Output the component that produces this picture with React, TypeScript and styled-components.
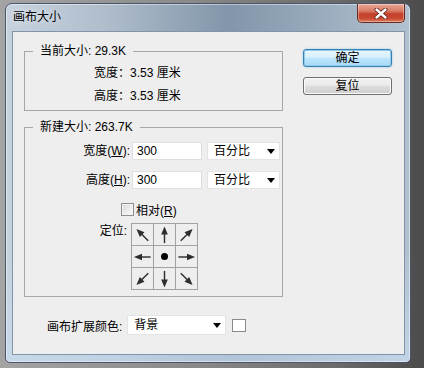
import styled, { createGlobalStyle } from 'styled-components';

const GlobalStyle = createGlobalStyle`
  html, body {
    margin: 0;
    padding: 0;
  }
  body {
    width: 424px;
    height: 368px;
    overflow: hidden;
    background: linear-gradient(90deg, #a4a4a4 0%, #8a8a8a 45%, #6a6a6a 80%, #4b4b4b 100%);
    font-family: 'Liberation Sans', 'Noto Sans CJK SC', sans-serif;
    font-size: 12px;
    color: #000;
  }
`;

const Window = styled.div`
  box-sizing: border-box;
  margin: 3px 0 0 5px;
  width: 406px;
  height: 360px;
  border: 1px solid #48566a;
  border-radius: 7px 7px 5px 5px;
  padding: 0 5px 7px 6px;
  display: flex;
  flex-direction: column;
  box-shadow: inset 0 0 0 1px rgba(255, 255, 255, 0.45);
  background:
    linear-gradient(180deg, rgba(255, 255, 255, 0) 70%, rgba(200, 220, 238, 0.7) 100%),
    linear-gradient(90deg, #c6d2de 0%, #afbdcb 25%, #8295aa 55%, #99abbd 78%, #b3c2d0 100%);
`;

const TitleBar = styled.div`
  height: 27px;
  display: flex;
  justify-content: space-between;
  align-items: flex-start;
`;

const Title = styled.div`
  margin: 4px 0 0 1px;
  line-height: 16px;
  font-size: 12px;
  font-family: 'Noto Sans CJK SC', sans-serif;
  text-shadow: 0 0 6px rgba(255, 255, 255, 0.9);
`;

const CloseButton = styled.div`
  width: 48px;
  height: 19px;
  box-sizing: border-box;
  border: 1px solid #6b2a1e;
  border-top: none;
  border-radius: 0 0 5px 5px;
  background: linear-gradient(180deg, #e9a899 0%, #d77a64 40%, #c4402a 55%, #c84a31 80%, #dd7f62 100%);
  box-shadow: inset 0 0 0 1px rgba(255, 255, 255, 0.35);
  display: flex;
  align-items: center;
  justify-content: center;
`;

const Client = styled.div`
  flex: 1;
  background: #eeeeee;
  border: 1px solid #8194a9;
  display: flex;
  flex-direction: column;
`;

const Top = styled.div`
  display: flex;
  gap: 20px;
  padding: 12px 0 0 11px;
`;

const LeftColumn = styled.div`
  display: flex;
  flex-direction: column;
  gap: 9px;
`;

const Group = styled.fieldset<{ $pad: string }>`
  box-sizing: border-box;
  width: 259px;
  min-width: 0;
  margin: 0;
  padding: ${(p) => p.$pad};
  border: 1px solid #a6a6a6;
`;

const Legend = styled.legend`
  margin-left: 8px;
  padding: 0 7px;
  line-height: 14px;
`;

const InfoRows = styled.div`
  display: grid;
  grid-template-columns: auto 1fr;
  row-gap: 7px;
  padding-left: 69px;
  line-height: 16px;
`;

const FormGrid = styled.div`
  display: grid;
  grid-template-columns: 102px 70px 73px;
  column-gap: 5px;
  align-items: center;
`;

const FieldLabel = styled.div`
  text-align: right;
  line-height: 16px;
  margin-right: -3px;
`;

const TextInput = styled.div`
  box-sizing: border-box;
  height: 18px;
  background: #fff;
  border: 1px solid #dedede;
  padding-left: 4px;
  line-height: 16px;
`;

const Dropdown = styled.div<{ $w: number; $h: number }>`
  box-sizing: border-box;
  width: ${(p) => p.$w}px;
  height: ${(p) => p.$h}px;
  background: #fff;
  border: 1px solid #e4e4e4;
  padding: 0 4px 0 6px;
  display: flex;
  align-items: center;
  justify-content: space-between;
  line-height: 16px;
`;

const SecondRow = styled.div`
  display: contents;
  & > * {
    margin-top: 11px;
  }
`;

const CheckRow = styled.div`
  grid-column: 1 / -1;
  margin-top: 11px;
  height: 18px;
  padding-left: 96px;
  display: flex;
  align-items: center;
  gap: 2px;
`;

const CheckBox = styled.div`
  box-sizing: border-box;
  width: 13px;
  height: 13px;
  border: 1px solid #8e8e8e;
  background: linear-gradient(135deg, #d6d6d6 0%, #eeeeee 60%, #fafafa 100%);
  box-shadow: inset 0 0 0 1px #f4f4f4;
`;

const AnchorRow = styled.div`
  grid-column: 1 / -1;
  margin-top: 5px;
  display: flex;
  align-items: flex-start;
`;

const AnchorLabel = styled.div`
  width: 102px;
  text-align: right;
  line-height: 16px;
`;

const AnchorGrid = styled.div`
  margin-left: 4px;
  display: grid;
  grid-template-columns: repeat(3, 22px);
  grid-auto-rows: 22px;
  border-left: 1px solid #a2a2a2;
  border-top: 1px solid #a2a2a2;
`;

const AnchorCell = styled.div`
  border-right: 1px solid #a2a2a2;
  border-bottom: 1px solid #a2a2a2;
  display: flex;
  align-items: center;
  justify-content: center;
`;

const Dot = styled.div`
  width: 7px;
  height: 7px;
  border-radius: 50%;
  background: #000;
`;

const RightColumn = styled.div`
  padding-top: 5px;
  display: flex;
  flex-direction: column;
  gap: 10px;
`;

const Button = styled.div<{ $primary?: boolean }>`
  box-sizing: border-box;
  width: 89px;
  height: 18px;
  border-radius: 3px;
  border: 1px solid ${(p) => (p.$primary ? '#3c7fb1' : '#707070')};
  background: ${(p) =>
    p.$primary
      ? 'linear-gradient(180deg, #eaf6fd 0%, #d9f0fc 45%, #bee6fd 50%, #a7d9f5 100%)'
      : 'linear-gradient(180deg, #f2f2f2 0%, #ebebeb 45%, #dddddd 50%, #cfcfcf 100%)'};
  box-shadow: ${(p) =>
    p.$primary ? 'inset 0 0 0 1px #8ecbea, 0 0 2px #7fc4e8' : 'inset 0 0 0 1px #fafafa'};
  text-align: center;
  line-height: 16px;
`;

const Bottom = styled.div`
  margin-top: 18px;
  padding-left: 34px;
  display: flex;
  align-items: center;
  gap: 5px;
`;

const Swatch = styled.div`
  box-sizing: border-box;
  width: 14px;
  height: 13px;
  margin-left: 1px;
  background: #fff;
  border: 1px solid #8a8a8a;
`;

const Key = styled.span`
  text-decoration: underline;
`;

const Caret = () => (
  <svg width="8" height="5" viewBox="0 0 8 5">
    <polygon points="0,0 8,0 4,5" fill="#000" />
  </svg>
);

const Arrow = ({ angle }: { angle: number }) => (
  <svg width="22" height="22" viewBox="0 0 22 22">
    <g transform={`rotate(${angle} 11 11)`}>
      <line x1="11" y1="19.5" x2="11" y2="9" stroke="#2e2e2e" strokeWidth="1.5" />
      <polygon points="11,2 7.5,10.5 14.5,10.5" fill="#2e2e2e" />
    </g>
  </svg>
);

const anchors: (number | null)[] = [-45, 0, 45, -90, null, 90, -135, 180, 135];

export default function App() {
  return (
    <>
      <GlobalStyle />
      <Window>
        <TitleBar>
          <Title>画布大小</Title>
          <CloseButton>
            <svg width="14" height="11" viewBox="0 0 14 11">
              <path d="M2.5 1.5 L11.5 9.5 M11.5 1.5 L2.5 9.5" stroke="#5a1d12" strokeWidth="4" strokeLinecap="round" />
              <path d="M2.5 1.5 L11.5 9.5 M11.5 1.5 L2.5 9.5" stroke="#fff" strokeWidth="2.4" strokeLinecap="round" />
            </svg>
          </CloseButton>
        </TitleBar>
        <Client>
          <Top>
            <LeftColumn>
              <Group $pad="7px 0 6px 0">
                <Legend>当前大小: 29.3K</Legend>
                <InfoRows>
                  <span>宽度：</span>
                  <span>3.53 厘米</span>
                  <span>高度：</span>
                  <span>3.53 厘米</span>
                </InfoRows>
              </Group>
              <Group $pad="8px 0 6px 0">
                <Legend>新建大小: 263.7K</Legend>
                <FormGrid>
                  <FieldLabel>
                    宽度(<Key>W</Key>):
                  </FieldLabel>
                  <TextInput>300</TextInput>
                  <Dropdown $w={73} $h={18}>
                    百分比
                    <Caret />
                  </Dropdown>
                  <SecondRow>
                    <FieldLabel>
                      高度(<Key>H</Key>):
                    </FieldLabel>
                    <TextInput>300</TextInput>
                    <Dropdown $w={73} $h={18}>
                      百分比
                      <Caret />
                    </Dropdown>
                  </SecondRow>
                  <CheckRow>
                    <CheckBox />
                    <span>
                      相对(<Key>R</Key>)
                    </span>
                  </CheckRow>
                  <AnchorRow>
                    <AnchorLabel>定位:</AnchorLabel>
                    <AnchorGrid>
                      {anchors.map((a, i) => (
                        <AnchorCell key={i}>{a === null ? <Dot /> : <Arrow angle={a} />}</AnchorCell>
                      ))}
                    </AnchorGrid>
                  </AnchorRow>
                </FormGrid>
              </Group>
            </LeftColumn>
            <RightColumn>
              <Button $primary>确定</Button>
              <Button>复位</Button>
            </RightColumn>
          </Top>
          <Bottom>
            <span>画布扩展颜色:</span>
            <Dropdown $w={99} $h={20}>
              背景
              <Caret />
            </Dropdown>
            <Swatch />
          </Bottom>
        </Client>
      </Window>
    </>
  );
}
